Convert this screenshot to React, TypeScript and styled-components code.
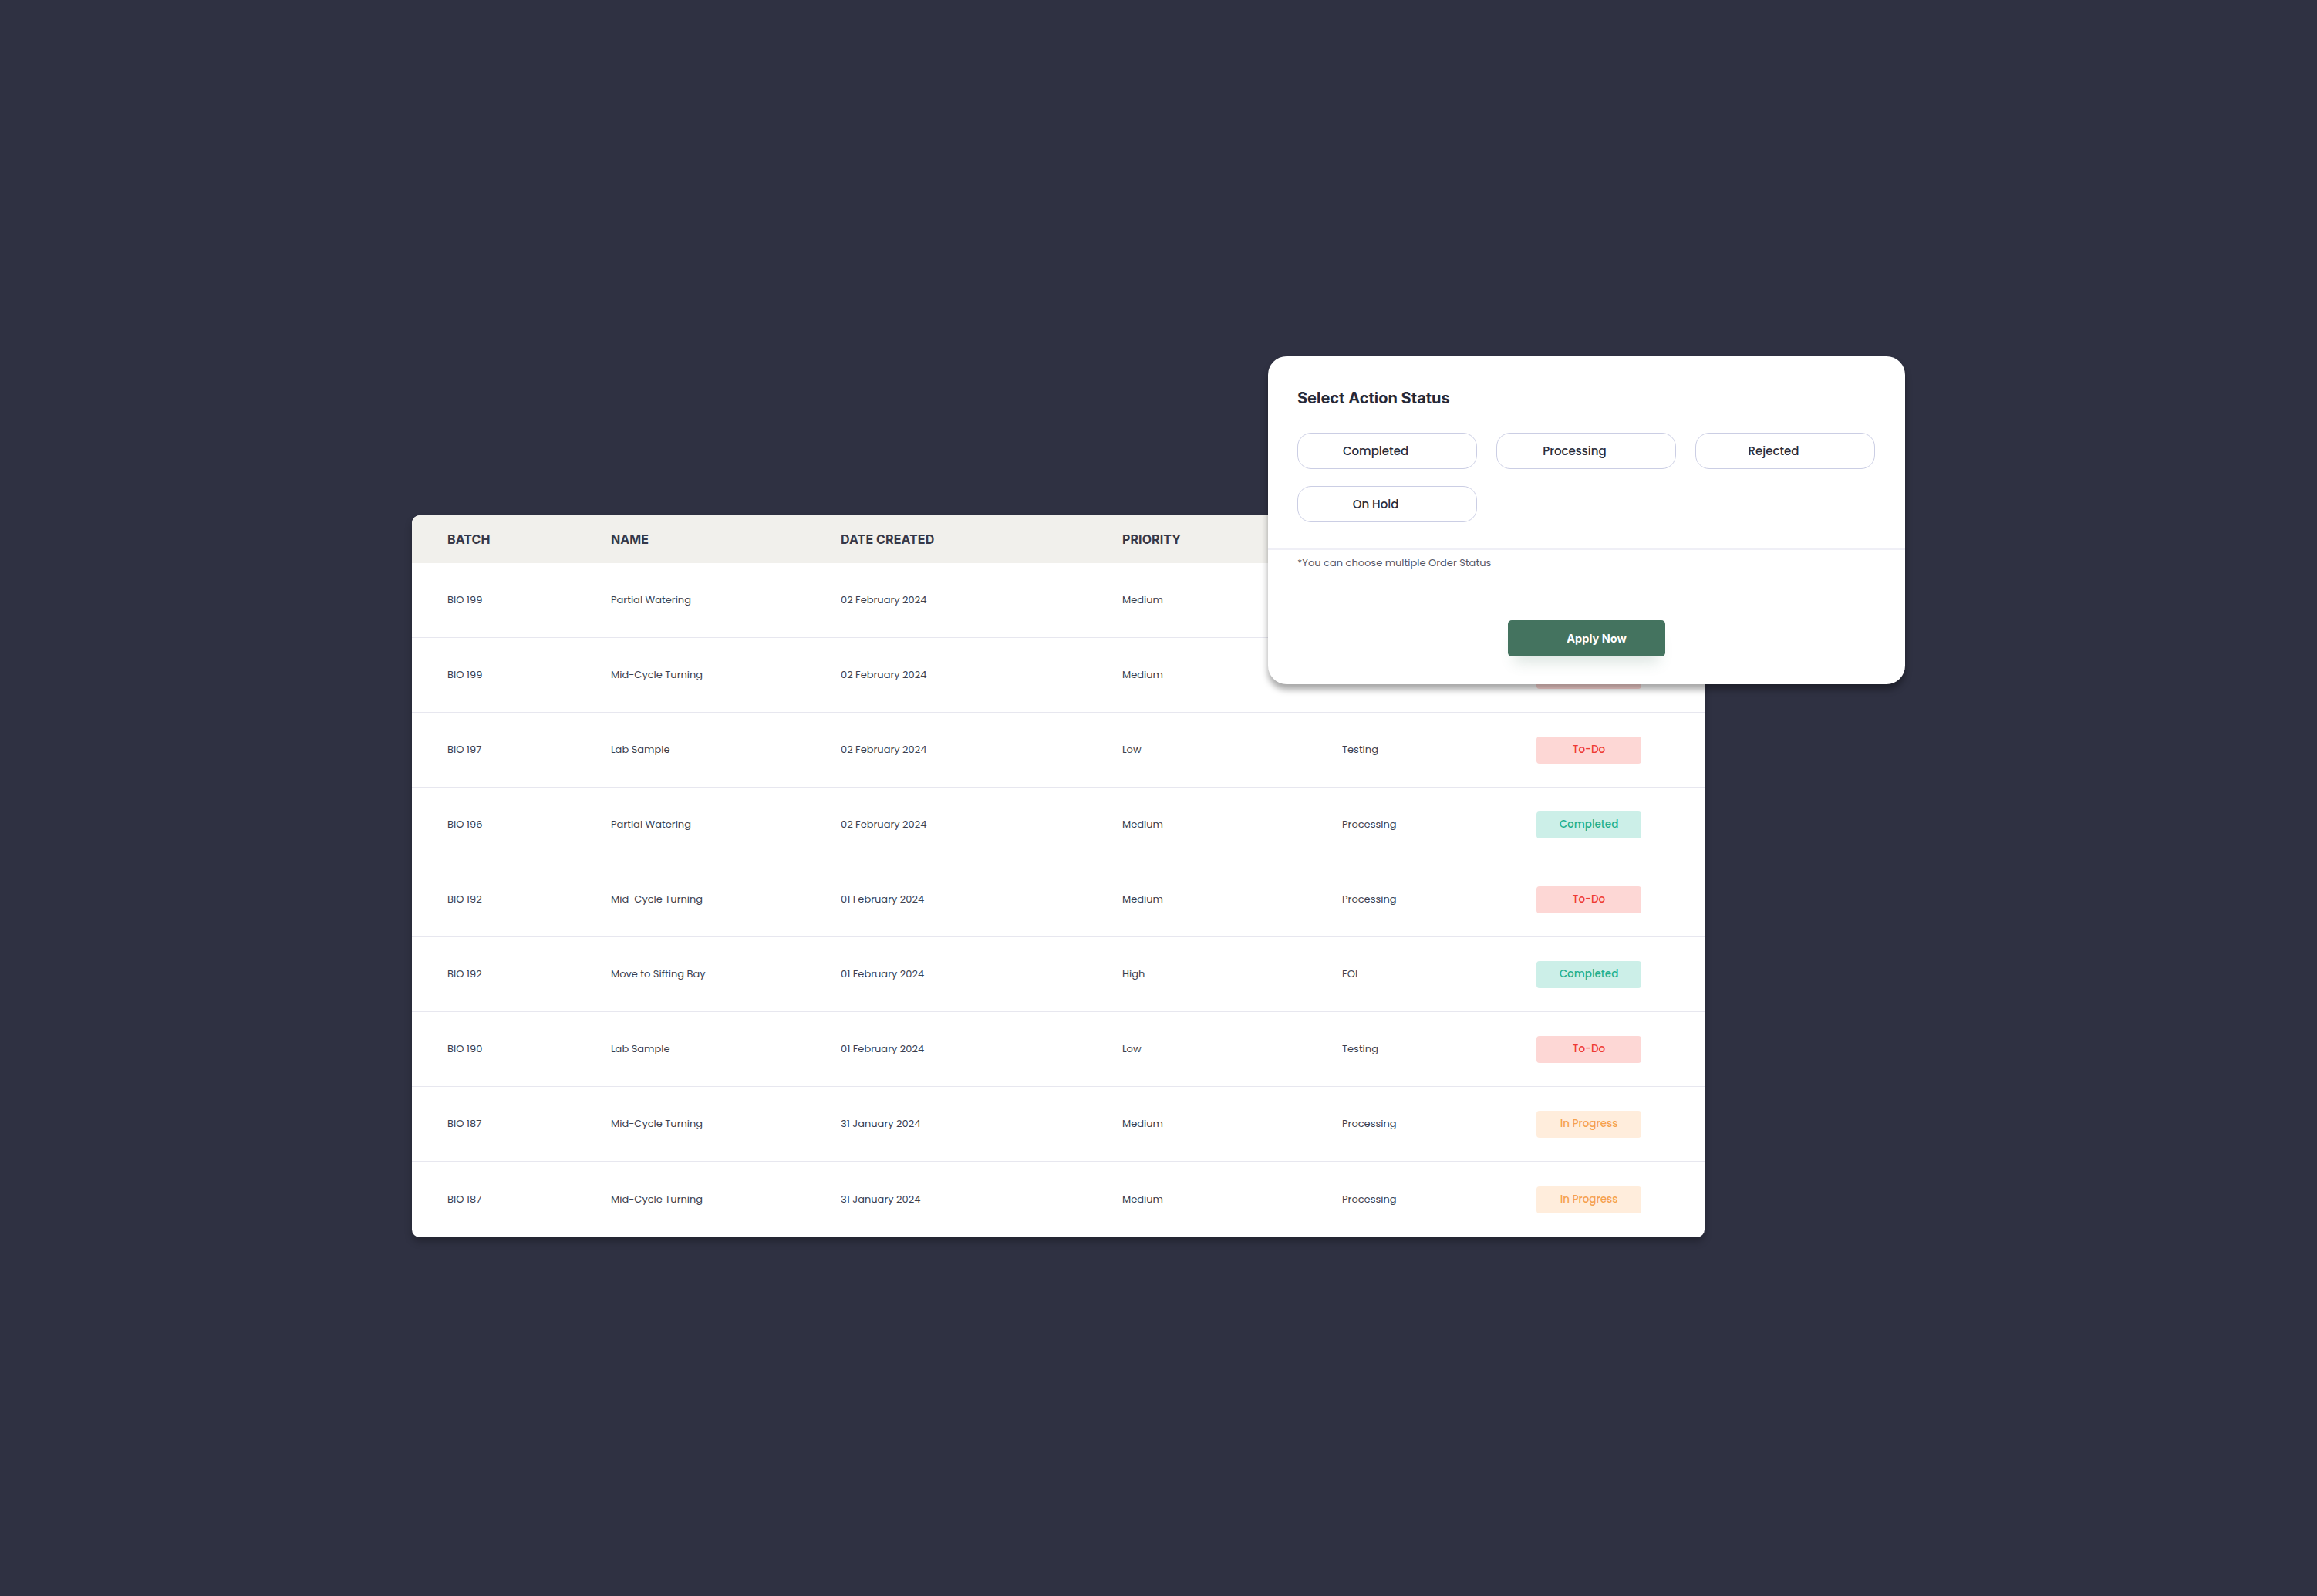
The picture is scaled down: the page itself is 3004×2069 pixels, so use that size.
import React from "react";
import styled, { createGlobalStyle } from "styled-components";

const Global = createGlobalStyle`
  html, body { margin: 0; padding: 0; background: #2f3142; }
  * { box-sizing: border-box; }
`;

const Stage = styled.div`
  position: relative;
  width: 3004px;
  height: 2069px;
  background: #2f3142;
  padding: 668px 0 0 534px;
  font-family: "Poppins", "Inter", "Open Sans", sans-serif;
`;

const Table = styled.div`
  width: 1676px;
  background: #ffffff;
  border-radius: 10px;
  overflow: hidden;
  box-shadow: 0 6px 10px rgba(0, 0, 0, 0.25);
`;

const cols = "212px 298px 365px 285px 252px 136px";

const HeadRow = styled.div`
  display: grid;
  grid-template-columns: ${cols};
  align-items: center;
  height: 62px;
  padding: 0 46px;
  background: #f1f0ec;
`;

const HeadCell = styled.div`
  font-family: "Inter", "Lato", sans-serif;
  font-weight: 700;
  font-size: 16px;
  letter-spacing: 0.1px;
  color: #363848;
  text-transform: uppercase;
`;

const Row = styled.div<{ $last?: boolean }>`
  display: grid;
  grid-template-columns: ${cols};
  align-items: center;
  height: ${(p) => (p.$last ? "98px" : "97px")};
  padding: 0 46px;
  border-bottom: ${(p) => (p.$last ? "none" : "1.5px solid #e7e7ef")};
`;

const Cell = styled.div`
  font-size: 13px;
  color: #3d3f4f;
  white-space: nowrap;
`;

const badgeColors: Record<string, { bg: string; fg: string }> = {
  "To-Do": { bg: "#fdd7d5", fg: "#ef3b34" },
  Completed: { bg: "#ccefe8", fg: "#1eb090" },
  "In Progress": { bg: "#ffeddc", fg: "#f6a24e" },
};

const Badge = styled.div<{ $bg: string; $fg: string }>`
  width: 136px;
  height: 35px;
  border-radius: 4px;
  background: ${(p) => p.$bg};
  color: ${(p) => p.$fg};
  display: flex;
  align-items: center;
  justify-content: center;
  font-size: 13.5px;
  font-weight: 500;
`;

const Modal = styled.div`
  position: absolute;
  left: 1644px;
  top: 462px;
  width: 826px;
  height: 425px;
  background: #ffffff;
  border-radius: 24px;
  box-shadow: 0 7px 8px rgba(0, 0, 0, 0.35);
  display: flex;
  flex-direction: column;
`;

const ModalTop = styled.div`
  padding: 42px 39px 34px 38px;
  border-bottom: 2px solid #efeff6;
`;

const Title = styled.h2`
  margin: 0;
  font-family: "Inter", "Lato", sans-serif;
  font-weight: 700;
  font-size: 20px;
  line-height: 24px;
  color: #262837;
`;

const Chips = styled.div`
  margin-top: 33px;
  display: grid;
  grid-template-columns: repeat(3, 233px);
  column-gap: 25px;
  row-gap: 22px;
`;

const Chip = styled.button`
  height: 47px;
  border: 1.5px solid #cbcee4;
  border-radius: 18px;
  background: #ffffff;
  font-family: "Poppins", "Inter", sans-serif;
  font-size: 15px;
  font-weight: 500;
  color: #2b2d3b;
  display: flex;
  align-items: center;
  justify-content: center;
  padding: 0 30px 0 0;
  cursor: pointer;
`;

const ModalBottom = styled.div`
  flex: 1;
  padding: 8px 38px 36px;
  display: flex;
  flex-direction: column;
  justify-content: space-between;
  align-items: flex-start;
`;

const Hint = styled.p`
  margin: 0;
  font-size: 13px;
  line-height: 18px;
  color: #555767;
`;

const ApplyButton = styled.button`
  align-self: center;
  width: 204px;
  height: 47px;
  border: none;
  border-radius: 5px;
  background: #44735f;
  color: #ffffff;
  font-family: "Inter", "Lato", sans-serif;
  font-weight: 700;
  font-size: 14.5px;
  padding: 0 0 0 26px;
  box-shadow: 0 16px 18px -8px rgba(68, 115, 95, 0.18);
  cursor: pointer;
`;

type RowData = [string, string, string, string, string, string];

const rows: RowData[] = [
  ["BIO 199", "Partial Watering", "02 February 2024", "Medium", "Processing", "Completed"],
  ["BIO 199", "Mid-Cycle Turning", "02 February 2024", "Medium", "Processing", "To-Do"],
  ["BIO 197", "Lab Sample", "02 February 2024", "Low", "Testing", "To-Do"],
  ["BIO 196", "Partial Watering", "02 February 2024", "Medium", "Processing", "Completed"],
  ["BIO 192", "Mid-Cycle Turning", "01 February 2024", "Medium", "Processing", "To-Do"],
  ["BIO 192", "Move to Sifting Bay", "01 February 2024", "High", "EOL", "Completed"],
  ["BIO 190", "Lab Sample", "01 February 2024", "Low", "Testing", "To-Do"],
  ["BIO 187", "Mid-Cycle Turning", "31 January 2024", "Medium", "Processing", "In Progress"],
  ["BIO 187", "Mid-Cycle Turning", "31 January 2024", "Medium", "Processing", "In Progress"],
];

export default function App() {
  return (
    <>
      <Global />
      <Stage>
        <Table>
          <HeadRow>
            <HeadCell>Batch</HeadCell>
            <HeadCell>Name</HeadCell>
            <HeadCell>Date Created</HeadCell>
            <HeadCell>Priority</HeadCell>
            <HeadCell>Stage</HeadCell>
            <HeadCell>Status</HeadCell>
          </HeadRow>
          {rows.map((r, i) => {
            const c = badgeColors[r[5]];
            return (
              <Row key={i} $last={i === rows.length - 1}>
                <Cell>{r[0]}</Cell>
                <Cell>{r[1]}</Cell>
                <Cell>{r[2]}</Cell>
                <Cell>{r[3]}</Cell>
                <Cell>{r[4]}</Cell>
                <Badge $bg={c.bg} $fg={c.fg}>{r[5]}</Badge>
              </Row>
            );
          })}
        </Table>
        <Modal>
          <ModalTop>
            <Title>Select Action Status</Title>
            <Chips>
              <Chip>Completed</Chip>
              <Chip>Processing</Chip>
              <Chip>Rejected</Chip>
              <Chip>On Hold</Chip>
            </Chips>
          </ModalTop>
          <ModalBottom>
            <Hint>*You can choose multiple Order Status</Hint>
            <ApplyButton>Apply Now</ApplyButton>
          </ModalBottom>
        </Modal>
      </Stage>
    </>
  );
}
